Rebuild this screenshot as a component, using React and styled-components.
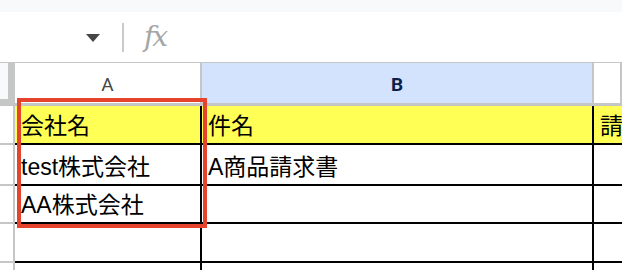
import React from 'react'
import styled, { createGlobalStyle } from 'styled-components'

const GlobalStyle = createGlobalStyle`
  html, body {
    margin:0;
    padding:0;
    background:#fff;
    overflow:hidden;
  }
  *{
    box-sizing:border-box;
  }
`

const columns = [
  { key: 'A', label: 'A', selected: false },
  { key: 'B', label: 'B', selected: true },
  { key: 'C', label: '', selected: false },
]

const rows = [
  { id: 1, height: 39, fill: '#ffff55', cells: ['会社名', '件名', '請求'] },
  { id: 2, height: 41, cells: ['test株式会社', 'A商品請求書', ''] },
  { id: 3, height: 38, cells: ['AA株式会社', '', ''] },
  { id: 4, height: 39, cells: ['', '', ''] },
  { id: 5, height: 39, cells: ['', '', ''] },
]

export default function App() {
  return (
    <Page>
      <GlobalStyle />
      <TopStrip />
      <FormulaBar>
        <NameBox>
          <Caret />
        </NameBox>
        <Divider />
        <Fx>fx</Fx>
      </FormulaBar>
      <Sheet>
        <HeaderRow>
          <Corner />
          {columns.map(col => (
            <ColHeader key={col.key} selected={col.selected}>{col.label}</ColHeader>
          ))}
        </HeaderRow>
        {rows.map(row => (
          <Row key={row.id} height={row.height}>
            <RowHeader />
            {row.cells.map((text, index) => (
              <Cell key={index} fill={row.fill} last={index === row.cells.length - 1}>{text}</Cell>
            ))}
          </Row>
        ))}
        <SelectionBox />
      </Sheet>
    </Page>
  )
}

const Page = styled.div`
  width:622px;
  height:270px;
  overflow:hidden;
  font-family:"Liberation Sans", "Noto Sans CJK JP", sans-serif;
`

const TopStrip = styled.div`
  height:12px;
  background:#f8f9fa;
`

const FormulaBar = styled.div`
  height:51px;
  display:flex;
  align-items:center;
  background:#fff;
  border-bottom:1px solid #c4c7c5;
  padding-top:1px;
`

const NameBox = styled.div`
  width:122px;
  height:100%;
  display:flex;
  align-items:center;
  padding-left:86px;
`

const Caret = styled.span`
  width:0;
  height:0;
  border-left:7px solid transparent;
  border-right:7px solid transparent;
  border-top:8px solid #444746;
  margin-top:1px;
`

const Divider = styled.div`
  width:2px;
  height:29px;
  background:#c9cbcb;
`

const Fx = styled.span`
  margin-left:20px;
  font-family:"DejaVu Serif", "Liberation Serif", serif;
  font-style:italic;
  font-size:28px;
  color:#a5a6a7;
  letter-spacing:-2px;
  line-height:1;
  margin-top:-1px;
`

const Sheet = styled.div`
  position:relative;
`

const grid = `
  display:grid;
  grid-template-columns:15px 187px 392px 1fr;
`

const HeaderRow = styled.div`
  ${grid}
  height:43px;
`

const Corner = styled.div`
  background:#f8f9fa;
  border-right:7px solid #c4c7c5;
  border-bottom:7px solid #c4c7c5;
`

const ColHeader = styled.div`
  display:flex;
  align-items:center;
  justify-content:center;
  padding-top:3px;
  background:${props => props.selected ? '#d3e3fd' : '#fff'};
  color:${props => props.selected ? '#0b1f4d' : '#444746'};
  font-family:Roboto, "Liberation Sans", sans-serif;
  font-weight:${props => props.selected ? 700 : 400};
  font-size:19px;
  border-right:2px solid #c4c7c5;
  border-bottom:3px solid #c4c7c5;
`

const Row = styled.div`
  ${grid}
  height:${props => props.height}px;
`

const RowHeader = styled.div`
  background:#fff;
  border-right:2px solid #c4c7c5;
  border-bottom:2px solid #c4c7c5;
`

const Cell = styled.div`
  display:flex;
  align-items:flex-end;
  padding:0 0 4px 6px;
  overflow:hidden;
  white-space:nowrap;
  background:${props => props.fill || '#fff'};
  border-right:${props => props.last ? 'none' : '2px solid #000'};
  border-bottom:2px solid #000;
  font-size:23px;
  color:#000;
  line-height:1.15;
`

const SelectionBox = styled.div`
  position:absolute;
  left:17px;
  top:35px;
  width:190px;
  height:130px;
  border:4px solid #e5432b;
  pointer-events:none;
`
